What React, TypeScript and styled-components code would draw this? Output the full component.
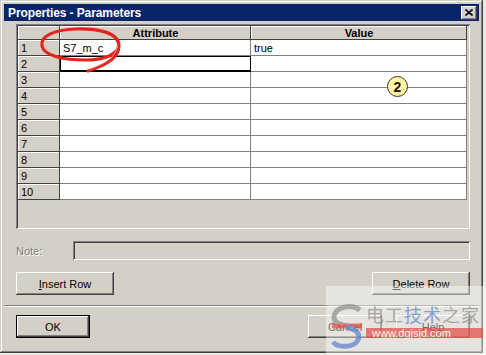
import React from 'react';
import styled, { createGlobalStyle } from 'styled-components';

const GlobalStyle = createGlobalStyle`
  html, body {
    margin: 0;
    padding: 0;
    background: #ecebe6;
  }
  body {
    font-family: "Liberation Sans", Arial, sans-serif;
    font-size: 11px;
  }
`;

const face = '#d4d0c8';
const shadow = '#808080';
const darkShadow = '#404040';

const StyledRoot = styled.div`
  position: relative;
  width: 486px;
  height: 355px;
  overflow: hidden;
`;

const DialogWindow = styled.div`
  box-sizing: border-box;
  width: 483px;
  height: 353px;
  padding: 4px 4px 0 4px;
  display: flex;
  flex-direction: column;
  background: ${face};
  box-shadow: inset -1px -1px ${darkShadow}, inset 1px 1px ${face},
    inset -2px -2px ${shadow}, inset 2px 2px #fff;
`;

const TitleBar = styled.div`
  height: 17px;
  display: flex;
  align-items: center;
  justify-content: space-between;
  padding: 0 2px 0 4px;
  background: #0a246a;
  color: #fff;
  font-weight: bold;
  font-size: 12px;
  letter-spacing: -0.1px;
`;

const CloseBox = styled.div`
  width: 16px;
  height: 14px;
  display: flex;
  align-items: center;
  justify-content: center;
  background: ${face};
  box-shadow: inset -1px -1px ${darkShadow}, inset 1px 1px #fff,
    inset -2px -2px ${shadow};
`;

const Body = styled.div`
  display: flex;
  flex-direction: column;
  padding: 3px 9px 0 12px;
`;

const GridFrame = styled.div`
  box-sizing: border-box;
  height: 205px;
  padding: 2px;
  background: ${face};
  box-shadow: inset 1px 1px ${shadow}, inset -1px -1px #fff,
    inset 2px 2px ${darkShadow}, inset -2px -2px ${face};
`;

const Grid = styled.div`
  display: grid;
  grid-template-columns: 42px 191px 216px;
  grid-template-rows: 14px;
  grid-auto-rows: 16px;
`;

const HeadCell = styled.div<{ $center?: boolean }>`
  box-sizing: border-box;
  display: flex;
  align-items: center;
  justify-content: ${({ $center }) => ($center ? 'center' : 'flex-start')};
  padding-left: ${({ $center }) => ($center ? '0' : '3px')};
  background: ${face};
  font-weight: ${({ $center }) => ($center ? 'bold' : 'normal')};
  box-shadow: inset -1px -1px ${darkShadow}, inset 1px 1px #fff;
`;

const DataCell = styled.div<{ $focused?: boolean }>`
  box-sizing: border-box;
  display: flex;
  align-items: center;
  padding-left: 3px;
  background: #fff;
  border-right: 1px solid ${({ $focused }) => ($focused ? '#000' : shadow)};
  border-bottom: 1px solid ${({ $focused }) => ($focused ? '#000' : shadow)};
  box-shadow: ${({ $focused }) =>
    $focused ? 'inset 1px 1px #000, inset 0 -1px #000' : 'none'};
`;

const NoteRow = styled.div`
  margin-top: 12px;
  display: flex;
  align-items: center;
  height: 19px;
`;

const NoteLabel = styled.span`
  width: 57px;
  color: ${shadow};
  text-shadow: 1px 1px #fff;
`;

const NoteBox = styled.div`
  flex: 1;
  height: 19px;
  box-sizing: border-box;
  background: ${face};
  box-shadow: inset 1px 1px ${shadow}, inset -1px -1px #fff,
    inset 2px 2px ${darkShadow}, inset -2px -2px ${face};
`;

const ButtonRow = styled.div<{ $top: number }>`
  margin-top: ${({ $top }) => $top}px;
  display: flex;
  align-items: center;
  gap: 14px;
`;

const Spacer = styled.div`
  flex: 1;
`;

const DlgButton = styled.div<{ $width: number; $isDefault?: boolean }>`
  box-sizing: border-box;
  width: ${({ $width }) => $width}px;
  height: 23px;
  display: flex;
  align-items: center;
  justify-content: center;
  background: ${face};
  color: #000;
  font-size: 11px;
  box-shadow: ${({ $isDefault }) =>
    $isDefault
      ? `inset 0 0 0 1px #000, inset -2px -2px ${darkShadow}, inset 2px 2px #fff, inset -3px -3px ${shadow}`
      : `inset -1px -1px ${darkShadow}, inset 1px 1px #fff, inset -2px -2px ${shadow}, inset 2px 2px ${face}`};
`;

const Accel = styled.span`
  text-decoration: underline;
`;

const Separator = styled.div`
  margin-top: 10px;
  height: 1px;
  background: ${shadow};
  border-bottom: 1px solid #fff;
`;

const Footer = styled.div`
  padding: 8px 9px 0 12px;
`;

const Annotation = styled.svg`
  position: absolute;
  left: 0;
  top: 0;
  pointer-events: none;
`;

const Badge = styled.div`
  position: absolute;
  left: 387px;
  top: 76px;
  width: 21px;
  height: 21px;
  box-sizing: border-box;
  border-radius: 50%;
  border: 1px solid #3a3020;
  background: #fff7a6;
  display: flex;
  align-items: center;
  justify-content: center;
  font-family: "Liberation Sans", Arial, sans-serif;
  font-weight: bold;
  font-size: 14px;
  color: #2a0e0e;
`;

const Watermark = styled.div`
  position: absolute;
  left: 326px;
  top: 286px;
  width: 160px;
  height: 69px;
  background: rgba(255, 255, 255, 0.42);
  display: flex;
  padding: 18px 0 0 4px;
  box-sizing: border-box;
  gap: 2px;
`;

const WatermarkText = styled.div`
  display: flex;
  flex-direction: column;
  opacity: 0.7;
`;

const Brand = styled.div`
  font-family: "Noto Sans CJK SC", sans-serif;
  font-size: 18px;
  line-height: 20px;
  letter-spacing: 1px;
  color: #8c8c8c;
  white-space: nowrap;
`;

const BrandBlue = styled.span`
  color: #5a7fcf;
`;

const UrlBar = styled.div`
  margin-top: 4px;
  width: 117px;
  height: 10px;
  background: #e2483f;
  color: #fff;
  font-size: 11px;
  line-height: 10px;
  padding-left: 6px;
  box-sizing: border-box;
  font-family: "Liberation Sans", Arial, sans-serif;
`;

const rows = Array.from({ length: 10 }, (_, i) => i + 1);

function CloseIcon() {
  return (
    <svg width="8" height="7" viewBox="0 0 8 7">
      <path d="M0.5 0.5 L7.5 6.5 M7.5 0.5 L0.5 6.5" stroke="#000" strokeWidth="1.6" />
    </svg>
  );
}

function Logo() {
  return (
    <svg width="34" height="46" viewBox="0 0 34 46" style={{ opacity: 0.7 }}>
      <path d="M30 6 C22 0, 6 2, 4 12 C3 18, 10 21, 18 22" stroke="#8e8e8e" strokeWidth="5" fill="none" />
      <path d="M2 22 L32 22" stroke="#e2483f" strokeWidth="5" />
      <path d="M16 23 C26 25, 31 30, 28 36 C24 44, 8 44, 3 38" stroke="#5a7fcf" strokeWidth="5" fill="none" />
    </svg>
  );
}

export default function App() {
  return (
    <StyledRoot>
      <GlobalStyle />
      <DialogWindow>
        <TitleBar>
          <span>Properties - Parameters</span>
          <CloseBox>
            <CloseIcon />
          </CloseBox>
        </TitleBar>
        <Body>
          <GridFrame>
            <Grid>
              <HeadCell />
              <HeadCell $center>Attribute</HeadCell>
              <HeadCell $center>Value</HeadCell>
              {rows.map(n => (
                <React.Fragment key={n}>
                  <HeadCell>{n}</HeadCell>
                  <DataCell $focused={n === 2}>{n === 1 ? 'S7_m_c' : ''}</DataCell>
                  <DataCell>{n === 1 ? 'true' : ''}</DataCell>
                </React.Fragment>
              ))}
            </Grid>
          </GridFrame>
          <NoteRow>
            <NoteLabel>Note:</NoteLabel>
            <NoteBox />
          </NoteRow>
          <ButtonRow $top={12}>
            <DlgButton $width={98}>
              <span>
                <Accel>I</Accel>nsert Row
              </span>
            </DlgButton>
            <Spacer />
            <DlgButton $width={98}>
              <span>
                <Accel>D</Accel>elete Row
              </span>
            </DlgButton>
          </ButtonRow>
        </Body>
        <Separator />
        <Footer>
          <ButtonRow $top={0}>
            <DlgButton $width={74} $isDefault>
              OK
            </DlgButton>
            <Spacer />
            <DlgButton $width={74}>Cancel</DlgButton>
            <DlgButton $width={74}>Help</DlgButton>
          </ButtonRow>
        </Footer>
      </DialogWindow>

      <Annotation width="486" height="355" viewBox="0 0 486 355">
        <path
          d="M88 71 C100 67, 119 60, 119 46 C119 32, 96 28, 75 29 C54 30, 40 36, 42 46 C44 56, 64 60, 86 60 C101 60, 112 56, 117 50"
          stroke="#e3241d"
          strokeWidth="3.2"
          fill="none"
          strokeLinecap="round"
        />
        <path
          d="M90 69 C101 65, 117 58, 117 46"
          stroke="#ff9a90"
          strokeWidth="1"
          fill="none"
          strokeLinecap="round"
        />
      </Annotation>
      <Badge>2</Badge>

      <Watermark>
        <Logo />
        <WatermarkText>
          <Brand>
            电工<BrandBlue>技术</BrandBlue>之家
          </Brand>
          <UrlBar>www.dgjsjd.com</UrlBar>
        </WatermarkText>
      </Watermark>
    </StyledRoot>
  );
}
